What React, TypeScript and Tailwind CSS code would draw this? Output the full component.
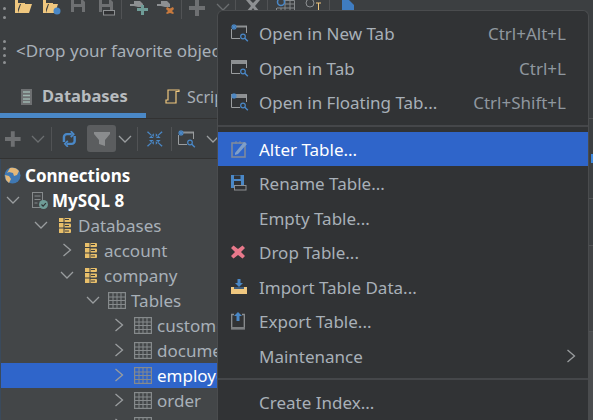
import React from "react";

const FONT = "font-['Segoe_UI','Noto_Sans','Open_Sans',sans-serif]";

const Chevron = ({ open, className }: { open?: boolean; className?: string }) => (
  <svg width="14" height="14" viewBox="0 0 14 14" className={`shrink-0 ${className ?? ""}`} fill="none" stroke="#9a9d9f" strokeWidth="1.3">
    {open ? <path d="M1 4 7 10l6-6" /> : <path d="M3.500 1 10.500 7l-7 6" />}
  </svg>
);

const TableIcon = () => (
  <svg width="18" height="17" viewBox="0 0 18 17" fill="none" stroke="#868a8c" strokeWidth="1">
    <rect x="0.5" y="0.5" width="17" height="16" strokeWidth="1.4" />
    <path d="M0 5h18M0 8.500h18M0 12.500h18M5 0v17M9 0v17M13 0v17" />
  </svg>
);

const DbIcon = () => (
  <svg width="12" height="15" viewBox="0 0 12 15" className="ml-[3px]">
    <rect width="5" height="15" x="0" fill="#e8bf6a" />
    <rect width="8" height="4" x="4" y="0" rx="1" fill="#e8bf6a" />
    <rect width="8" height="4" x="4" y="5.500" rx="1" fill="#e8bf6a" />
    <rect width="8" height="4" x="4" y="11" rx="1" fill="#e8bf6a" />
    <path d="M0 4.500h5M0 10h5M5 0v15" stroke="#3c3f41" />
    <path d="M6 1.500h4M6 7.500h4M6 13h4" stroke="#3c3f41" strokeWidth="1.200" />
  </svg>
);

const Globe = () => (
  <svg width="17" height="17" viewBox="0 0 17 17">
    <circle cx="8.500" cy="8.500" r="8" fill="#3f78b3" />
    <path d="M6 1c3-1 7 0 9 3l-2 4-3 1-1-3-4-1-2 1zM1 8l4 1 2 3-2 4-3-3z" fill="#e3b778" />
  </svg>
);

const ServerOk = () => (
  <svg width="16" height="17" viewBox="0 0 16 17" className="ml-[4px]">
    <rect x="0.500" y="0.500" width="10" height="15" fill="none" stroke="#868a8c" />
    <path d="M2.500 4h6M2.500 7.500h6M2.500 11h3" stroke="#868a8c" />
    <circle cx="11.500" cy="12.500" r="4.500" fill="#6f9c97" />
    <path d="m9.500 12.500 1.600 1.600 2.800-3" stroke="#2f3335" strokeWidth="1.200" fill="none" />
  </svg>
);

const TabSearch = ({ star, top }: { star?: boolean; top?: boolean }) => (
  <svg width="18" height="18" viewBox="0 0 18 18" fill="none">
    {top && <rect x="0" y="1" width="16" height="4" fill="#8d9092" />}
    {!top && <path d="M5 2.500h11" stroke="#8d9092" strokeWidth="2" />}
    <path d="M.5 5v9.500H9M15.500 2v7" stroke="#9a9d9f" />
    {star && <path d="M3 0v6M0 3h6M1 1l4 4M5 1 1 5" stroke="#4a88c7" strokeWidth="1.100" />}
    <circle cx="12" cy="12.500" r="2.300" stroke="#4a88c7" strokeWidth="1.200" />
    <path d="m13.800 14.300 3 3" stroke="#4a88c7" strokeWidth="1.400" />
  </svg>
);

const SaveIcon = ({ color = "#6e7072", base }: { color?: string; base?: boolean }) => (
  <svg width="16" height="16" viewBox="0 0 16 16">
    <path d="M0 0h12l2 2v10H0z" fill={color} />
    <rect x="3" y="0" width="7" height="4" fill="#3c3f41" />
    <rect x="3" y="7" width="8" height="5" fill="#3c3f41" />
    {base && <rect x="4.500" y="10.500" width="11" height="4.500" fill="#303133" stroke="#8d9092" />}
  </svg>
);

const Plus = () => (
  <svg width="16" height="16" viewBox="0 0 16 16">
    <path d="M6 0h4v6h6v4h-6v6H6v-6H0V6h6z" fill="#6e7072" />
  </svg>
);

const Plug = ({ badge }: { badge: "plus" | "x" }) => (
  <svg width="18" height="16" viewBox="0 0 18 16" fill="none">
    <path d="M0 5h4" stroke="#8d9092" strokeWidth="2" />
    <path d="M4 1h6l3 3v3H8L4 6z" fill="#8d9092" />
    {badge === "plus" ? (
      <path d="M11 5h3v3h4v3h-4v4h-3v-4H7V8h4z" fill="#6f9c97" />
    ) : (
      <path d="m10 7 3 1.500L16 7l1 2-2 2 2 2-1 1-3-1-3 1-1-1 2-2-2-2z" fill="#c77a3e" />
    )}
  </svg>
);

const menuItems: (
  | { sep: true }
  | { label: string; shortcut?: string; icon?: React.ReactNode; active?: boolean; sub?: boolean }
)[] = [
  { label: "Open in New Tab", shortcut: "Ctrl+Alt+L", icon: <TabSearch star /> },
  { label: "Open in Tab", shortcut: "Ctrl+L", icon: <TabSearch top /> },
  { label: "Open in Floating Tab...", shortcut: "Ctrl+Shift+L", icon: <TabSearch star top /> },
  { sep: true },
  {
    label: "Alter Table...",
    active: true,
    icon: (
      <svg width="17" height="18" viewBox="0 0 17 18" fill="none">
        <rect x="1" y="3" width="13" height="14" stroke="#7f8a9c" strokeWidth="1.600" />
        <path d="M4 13 13 2l3 2-9 10-3 1z" fill="#7f9fc9" />
        <path d="M5 1v3M9 1v3" stroke="#7f8a9c" />
      </svg>
    ),
  },
  {
    label: "Rename Table...",
    icon: (
      <svg width="16" height="16" viewBox="0 0 16 16">
        <path d="M0 0h13v10H0z" fill="#4a88c7" />
        <rect x="3" y="0.500" width="6.500" height="3.500" fill="#303133" />
        <rect x="3" y="6" width="7" height="4" fill="#303133" />
        <path d="M0 10h3v3H0z" fill="#4a88c7" />
        <rect x="3.500" y="10.500" width="11.500" height="4.500" fill="#303133" stroke="#8d9092" />
      </svg>
    ),
  },
  { label: "Empty Table..." },
  {
    label: "Drop Table...",
    icon: (
      <svg width="14" height="14" viewBox="0 0 14 14">
        <path d="M2.500.5 7 4l4.500-3.500 2.500 2.500L10 7l4 4-2.500 2.500L7 10l-4.500 3.500L0 11l4-4L0 3z" fill="#e8798b" />
      </svg>
    ),
  },
  {
    label: "Import Table Data...",
    icon: (
      <svg width="16" height="15" viewBox="0 0 16 15">
        <path d="M0 8h3v2h10V8h3v7H0z" fill="#efc77f" />
        <path d="M6.500 0h3v4H12L8 8 4 4h2.500z" fill="#4a88c7" />
        <rect x="3" y="8.500" width="10" height="1" fill="#4a88c7" />
      </svg>
    ),
  },
  {
    label: "Export Table...",
    icon: (
      <svg width="14" height="18" viewBox="0 0 14 18" fill="none">
        <path d="M3 2.500H.7v14h12.600v-14H11" stroke="#8d9092" strokeWidth="1.300" />
        <rect x="0" y="15" width="14" height="2.500" fill="#7c7f81" />
        <path d="M5.500 9V4H3l4-4 4 4H8.500v5z" fill="#4a88c7" />
      </svg>
    ),
  },
  { label: "Maintenance", sub: true },
  { sep: true },
  { label: "Create Index..." },
];

const treeRows = [
  { label: "Connections", pad: "pl-[3px]", bold: true, icon: <Globe />, iconW: "w-[21px]", white: true },
  { label: "MySQL 8", pad: "pl-[5px]", open: true, arrow: true, bold: true, icon: <ServerOk />, iconW: "w-[24px]", white: true },
  { label: "Databases", pad: "pl-[33px]", open: true, arrow: true, icon: <DbIcon />, iconW: "w-[22px]" },
  { label: "account", pad: "pl-[59px]", arrow: true, icon: <DbIcon />, iconW: "w-[22px]" },
  { label: "company", pad: "pl-[59px]", open: true, arrow: true, icon: <DbIcon />, iconW: "w-[22px]" },
  { label: "Tables", pad: "pl-[85px]", open: true, arrow: true, icon: <TableIcon />, iconW: "w-[23px]" },
  { label: "customer", pad: "pl-[111px]", arrow: true, icon: <TableIcon />, iconW: "w-[23px]" },
  { label: "document", pad: "pl-[111px]", arrow: true, icon: <TableIcon />, iconW: "w-[23px]" },
  { label: "employee", pad: "pl-[111px]", arrow: true, icon: <TableIcon />, iconW: "w-[23px]", selected: true },
  { label: "order", pad: "pl-[111px]", arrow: true, icon: <TableIcon />, iconW: "w-[23px]" },
  { label: "", pad: "pl-[111px]", arrow: true, icon: <TableIcon />, iconW: "w-[23px]" },
];

const Sep = ({ className }: { className?: string }) => <div className={`h-[19px] w-px shrink-0 bg-[#515355] ${className ?? ""}`} />;

const Sep2 = ({ className }: { className?: string }) => <div className={`h-[24px] w-px shrink-0 bg-[#515355] ${className ?? ""}`} />;

const Dot = () => <span className="h-[3px] w-[3px] rounded-full bg-[#8d9092]" />;

export default function App() {
  return (
    <div className={`${FONT} relative h-[420px] w-[593px] overflow-hidden bg-[#3c3f41] text-[17px] text-[#a8b0b8]`}>
      {/* top toolbar, cut off by the crop */}
      <div className="flex h-[22px] items-start pl-[3px]">
        <div className="flex w-[12px] shrink-0 flex-col gap-[6px] pt-[7px]">
          <Dot />
          <Dot />
        </div>
        <div className="flex items-start">
          <svg width="17" height="13" viewBox="0 0 17 13"><path d="M0 0h3v13H0zM3 13l3-9h11l-3 9zM3 3h7v1H5l-2 5z" fill="#efc77f" /></svg>
          <svg className="ml-[11px]" width="18" height="15" viewBox="0 0 18 15"><path d="M0 0h3v13H0zM3 13l3-9h9l-3 9zM3 3h7v1H5l-2 5z" fill="#efc77f" /><circle cx="14" cy="11" r="3.500" fill="#4a88c7" /></svg>
          <div className="ml-[10px]"><SaveIcon /></div>
          <div className="ml-[12px]"><SaveIcon base /></div>
          <Sep className="ml-[6px]" />
          <div className="ml-[8px]"><Plug badge="plus" /></div>
          <div className="ml-[9px]"><Plug badge="x" /></div>
          <Sep className="ml-[6px]" />
          <div className="ml-[7px]"><Plus /></div>
          <Chevron open className="ml-[11px] opacity-50" />
          <Sep className="ml-[5px]" />
          <svg className="ml-[8px]" width="18" height="12" viewBox="0 0 18 12"><path d="M2 0h4l3 3 3-3h4l-5 6 5 6h-4L9 8l-3 4H2l5-6z" fill="#8d9092" /></svg>
          <Sep className="ml-[5px]" />
          <svg className="ml-[8px]" width="19" height="14" viewBox="0 0 19 14" fill="none" stroke="#868a8c">
            <path d="M8 .5h10.500v13H.5V8M5 8v6M9 0v14M14 0v14M1 8h18M9 4h10" />
            <circle cx="5" cy="2" r="3.500" stroke="#4a88c7" strokeWidth="1.500" />
          </svg>
          <svg className="ml-[10px]" width="17" height="12" viewBox="0 0 17 12" fill="none"><circle cx="5" cy="3" r="4" stroke="#8d9092" /><path d="M11 3h5M13.500 3v7" stroke="#efc77f" /></svg>
          <Sep className="ml-[7px]" />
          <svg className="ml-[12px]" width="12" height="11" viewBox="0 0 12 11"><path d="M0 0h7l5 5v6H0z" fill="#3f7cc0" /></svg>
        </div>
      </div>

      {/* favorites drop bar */}
      <div className="flex h-[58px] items-center pl-[3px]">
        <div className="flex w-[13px] shrink-0 flex-col gap-[4px] pt-[1px]">
          <Dot />
          <Dot />
          <Dot />
          <Dot />
        </div>
        <span className="whitespace-nowrap">&lt;Drop your favorite objects here&gt;</span>
      </div>

      <div className="flex">
        {/* left panel */}
        <div className="w-[220px] shrink-0 overflow-hidden">
          {/* tabs */}
          <div className="relative flex h-[39px] items-center border-b border-[#323232] pb-[5px]">
            <div className="flex h-full w-[146px] shrink-0 items-center gap-[10px] pl-[21px]">
              <svg width="11" height="16" viewBox="0 0 11 16">
                <rect width="11" height="16" fill="#6e7072" />
                <path d="M2 3h7M2 6.500h7M2 10h7M2 13h7" stroke="#9db4ae" strokeWidth="1.500" />
              </svg>
              <span className="text-[16.500px] font-bold text-[#b8bcbf]">Databases</span>
            </div>
            <div className="flex items-center gap-[7px] pl-[19px]">
              <svg width="15" height="15" viewBox="0 0 15 15" fill="none" stroke="#efc77f" strokeWidth="1.200">
                <path d="M3 1h11v1.500H11V14H1v-3h2z" />
              </svg>
              <span className="text-[16px]">Scripts</span>
            </div>
            <div className="absolute bottom-0 left-0 h-[5px] w-[146px] bg-[#4a88c7]" />
          </div>

          {/* tree toolbar */}
          <div className="flex h-[40px] items-center border-b border-[#323232] pl-[5px]">
            <Plus />
            <Chevron open className="ml-[10px] opacity-50" />
            <Sep2 className="ml-[6px]" />
            <svg className="ml-[10px]" width="15" height="16" viewBox="0 0 15 16" fill="none" stroke="#4a88c7" strokeWidth="2.500">
              <path d="M2 11V6a3 3 0 0 1 3-3h5M13 5v5a3 3 0 0 1-3 3H5" />
              <path d="m9 0 3 3-3 3M6 10l-3 3 3 3" strokeWidth="1.800" />
            </svg>
            <div className="ml-[11px] flex h-[27px] w-[30px] items-center justify-center rounded-[3px] bg-[#5b5d5f]">
              <svg width="16" height="16" viewBox="0 0 16 16"><path d="M0 1h16v2l-5 6v6l-6-2V9L0 3z" fill="#8a8c8e" /></svg>
            </div>
            <Chevron open className="ml-[2px]" />
            <Sep2 className="ml-[5px]" />
            <svg className="ml-[9px]" width="16" height="16" viewBox="0 0 16 16">
              <path d="M0 1 1 0l6 6V2L2 7h5zM16 1l-1-1-6 6V2l5 5H9zM0 15l1 1 6-6v4L2 9h5zM16 15l-1 1-6-6v4l5-5H9z" fill="#4a88c7" />
            </svg>
            <Sep2 className="ml-[8px]" />
            <div className="ml-[6px]"><TabSearch star /></div>
            <Chevron open className="ml-[10px]" />
          </div>

          {/* tree */}
          <div className="h-[261px] border-l border-[#3a4a5c] bg-[#434648] pt-[3.500px]">
            {treeRows.map((row, i) => (
              <div
                key={i}
                className={`flex h-[25px] items-center whitespace-nowrap ${row.pad} ${
                  row.selected ? "bg-[#2f65ca] text-white" : row.white ? "text-white" : ""
                } ${row.bold ? "font-bold" : ""}`}
              >
                {row.arrow && <Chevron open={row.open} className="mr-[8px]" />}
                <div className={`flex shrink-0 items-center ${row.iconW}`}>{row.icon}</div>
                {row.label && <span className="pt-[1px]">{row.label}</span>}
              </div>
            ))}
          </div>
        </div>

        {/* what shows of the panes right of the menu */}
        <div className="flex flex-1 flex-col">
          <div className="h-[39px] border-b border-[#515355]" />
          <div className="flex h-[80px] items-center justify-end border-b border-[#515355]">
            <div className="h-[9px] w-[2px] bg-[#3f8ae0]" />
          </div>
          <div className="h-[47px] border-b border-[#515355]" />
          <div className="h-[86px] border-b border-[#515355] bg-[#414345]" />
          <div className="flex-1 bg-[#4a4c4e]" />
        </div>
      </div>

      {/* context menu */}
      <div className="absolute left-[217px] top-[10px] h-[420px] w-[372px] rounded-t-[6px] border border-b-0 border-[#4a4c4e] bg-[#313335] pt-[5px]">
        {menuItems.map((item, i) =>
          "sep" in item ? (
            <div key={i} className="my-[5px] h-[2px] bg-[#45474a]" />
          ) : (
            <div
              key={item.label}
              className={`flex h-[34.500px] items-center pl-[13px] pr-[22px] ${item.active ? "bg-[#2f65ca] text-white" : ""}`}
            >
              <div className="flex w-[28px] shrink-0 items-center justify-start">{item.icon}</div>
              <span className="pt-[1px]">{item.label}</span>
              {item.shortcut && <span className="ml-auto pt-[1px] text-[#8f979f]">{item.shortcut}</span>}
              {item.sub && <Chevron className="-mr-[12px] ml-auto" />}
            </div>
          ),
        )}
      </div>
    </div>
  );
}
